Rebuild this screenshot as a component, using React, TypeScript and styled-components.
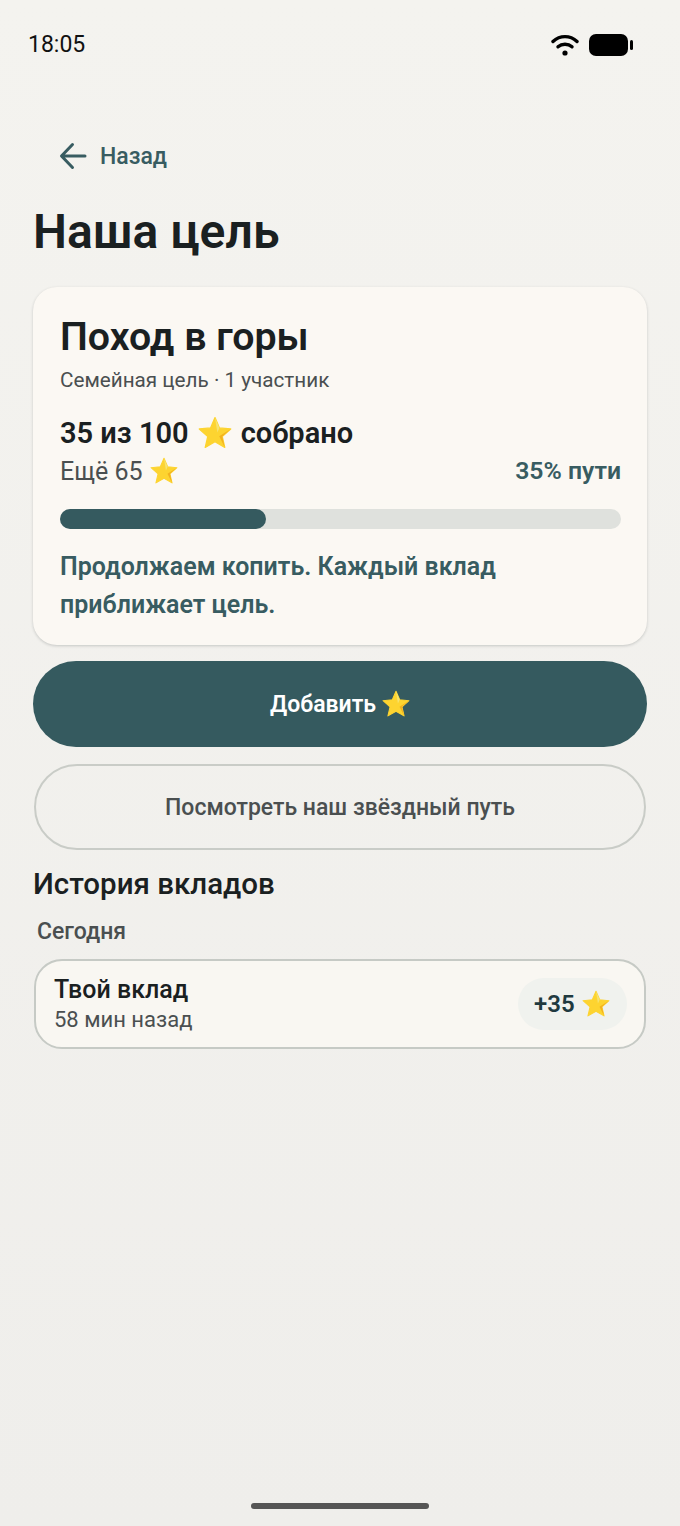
import styled, { createGlobalStyle } from 'styled-components';

const GlobalStyle = createGlobalStyle`
  html, body {
    margin: 0;
    padding: 0;
  }
  * {
    box-sizing: border-box;
  }
`;

const Screen = styled.main`
  width: 680px;
  height: 1526px;
  display: flex;
  flex-direction: column;
  font-family: Roboto, 'Liberation Sans', sans-serif;
  color: #1a2021;
  background: linear-gradient(180deg, #f4f3ef 0%, #efeeeb 100%);
`;
const StatusBar = styled.div`
  height: 88px;
  padding: 2px 46px 0 28px;
  display: flex;
  align-items: center;
  justify-content: space-between;
`;
const Clock = styled.span`
  font-size: 23px;
  line-height: 26px;
  color: #111;
`;
const StatusIcons = styled.div`
  display: flex;
  align-items: center;
  gap: 10px;
`;
const Content = styled.div`
  flex: 1;
  padding: 0 33px;
  display: flex;
  flex-direction: column;
`;
const BackRow = styled.div`
  margin: 46px 0 0 26px;
  height: 44px;
  display: flex;
  align-items: center;
  gap: 13px;
  font-size: 23px;
  font-weight: 500;
  color: #385c61;
`;
const PageTitle = styled.h1`
  margin: 24px 0 0;
  font-size: 48px;
  line-height: 60px;
  font-weight: 600;
  letter-spacing: 0.1px;
`;
const GoalCard = styled.section`
  margin-top: 25px;
  height: 358px;
  padding: 27px 26px 0 27px;
  border-radius: 24px;
  background: #fbf8f3;
  box-shadow: 0 1px 3px rgba(40, 50, 50, 0.22);
`;
const GoalTitle = styled.h2`
  margin: 0;
  font-size: 39.300px;
  line-height: 46px;
  font-weight: 600;
`;
const GoalMeta = styled.div`
  margin-top: 8px;
  font-size: 20.700px;
  line-height: 24px;
  color: #4a4f50;
`;
const Collected = styled.div`
  margin-top: 23px;
  display: flex;
  align-items: center;
  gap: 9px;
  font-size: 29px;
  line-height: 36px;
  font-weight: 600;
`;
const StatsRow = styled.div`
  margin-top: 2px;
  display: flex;
  align-items: center;
  justify-content: space-between;
  height: 36px;
`;
const Remaining = styled.span`
  display: flex;
  align-items: center;
  gap: 7px;
  font-size: 25px;
  color: #4a4f50;
`;
const Percent = styled.span`
  padding-bottom: 2px;
  font-size: 24.800px;
  font-weight: 600;
  color: #385c61;
`;
const Track = styled.div`
  margin-top: 20px;
  height: 20px;
  border-radius: 10px;
  background: #dfe1dd;
`;
const Fill = styled.div`
  height: 100%;
  border-radius: 10px;
  background: #355a5f;
`;
const Encouragement = styled.p`
  margin: 19px 0 0;
  font-size: 25px;
  line-height: 38px;
  font-weight: 600;
  color: #385c61;
`;
const PrimaryButton = styled.button`
  margin-top: 16px;
  height: 86px;
  flex: none;
  border: 0;
  border-radius: 43px;
  background: #355a5f;
  color: #fff;
  font: 600 23px Roboto, sans-serif;
  display: flex;
  align-items: center;
  justify-content: center;
  gap: 6px;
`;
const OutlineButton = styled.button`
  margin: 17px 1px 0;
  height: 86px;
  flex: none;
  border: 2px solid #c9ccc7;
  border-radius: 43px;
  background: transparent;
  color: #4a4f50;
  font: 500 23px Roboto, sans-serif;
`;
const HistoryTitle = styled.h3`
  margin: 17px 0 0;
  font-size: 29.500px;
  line-height: 34px;
  font-weight: 500;
`;
const DayLabel = styled.div`
  margin: 18px 0 0 4px;
  font-size: 23px;
  line-height: 26px;
  font-weight: 500;
  color: #4a4f50;
`;
const HistoryRow = styled.div`
  margin: 14px 1px 0;
  height: 90px;
  padding: 0 17px 0 18px;
  display: flex;
  align-items: center;
  justify-content: space-between;
  border: 2.500px solid #c6cac5;
  border-radius: 28px;
  background: #f9f7f2;
`;
const RowText = styled.div`
  display: flex;
  flex-direction: column;
  gap: 2px;
`;
const RowTitle = styled.span`
  font-size: 25px;
  line-height: 30px;
  font-weight: 500;
`;
const RowTime = styled.span`
  font-size: 22px;
  line-height: 26px;
  color: #4a4f50;
`;
const AmountPill = styled.div`
  height: 52px;
  width: 109px;
  padding: 0 0 0 16px;
  border-radius: 26px;
  display: flex;
  align-items: center;
  gap: 7px;
  background: #f0f2ee;
  font-size: 24px;
  font-weight: 600;
  color: #1f3a3f;
`;
const HomeBar = styled.div`
  width: 178px;
  height: 6px;
  margin: 0 auto 17px;
  border-radius: 3px;
  background: #555;
`;

const Star = ({ size }: { size: number }) => (
  <svg width={size} height={size} viewBox="0 0 32 32" style={{ flex: 'none' }}>
    <path
      d="M16 1.5 20.2 11.2 30.8 12.2 22.8 19.2 25.2 29.6 16 24.2 6.8 29.6 9.2 19.2 1.2 12.2 11.8 11.2Z"
      fill="#fdd430"
      stroke="#fdd430"
      strokeWidth="1.2"
      strokeLinejoin="round"
    />
    <path d="M16 1.5 20.2 11.2 18.2 15.5Z" fill="#f6e36f" />
    <path d="M30.8 12.2 22.8 19.2 25.2 29.6 20 19Z" fill="#f2b21f" />
  </svg>
);

const WifiIcon = () => (
  <svg width="28" height="24" viewBox="0 0 28 24" fill="none" stroke="#000" strokeLinecap="round">
    <path d="M2 8.500C9 2 19 2 26 8.500" strokeWidth="3.400" />
    <path d="M7 13.800C11 10.300 17 10.300 21 13.800" strokeWidth="3.400" />
    <circle cx="14" cy="20" r="2.600" fill="#000" stroke="none" />
  </svg>
);

const BatteryIcon = () => (
  <svg width="45" height="22" viewBox="0 0 45 22">
    <rect x="0" y="0" width="39" height="22" rx="7" fill="#000" />
    <rect x="41" y="6" width="3" height="10" rx="1.500" fill="#000" />
  </svg>
);

const BackArrow = () => (
  <svg width="28" height="28" viewBox="0 0 28 28" fill="none" stroke="#385c61" strokeWidth="3" strokeLinecap="round" strokeLinejoin="round">
    <path d="M26 14H3M13.500 2.500 2.500 14l11 11.500" />
  </svg>
);

export default function App() {
  return (
    <Screen>
      <GlobalStyle />
      <StatusBar>
        <Clock>18:05</Clock>
        <StatusIcons>
          <WifiIcon />
          <BatteryIcon />
        </StatusIcons>
      </StatusBar>
      <Content>
        <BackRow>
          <BackArrow />
          Назад
        </BackRow>
        <PageTitle>Наша цель</PageTitle>
        <GoalCard>
          <GoalTitle>Поход в горы</GoalTitle>
          <GoalMeta>Семейная цель · 1 участник</GoalMeta>
          <Collected>
            35 из 100 <Star size={34} /> собрано
          </Collected>
          <StatsRow>
            <Remaining>
              Ещё 65 <Star size={28} />
            </Remaining>
            <Percent>35% пути</Percent>
          </StatsRow>
          <Track>
            <Fill style={{ width: `${(206 / 561) * 100}%` }} />
          </Track>
          <Encouragement>
            Продолжаем копить. Каждый вклад
            <br />
            приближает цель.
          </Encouragement>
        </GoalCard>
        <PrimaryButton>
          Добавить <Star size={28} />
        </PrimaryButton>
        <OutlineButton>Посмотреть наш звёздный путь</OutlineButton>
        <HistoryTitle>История вкладов</HistoryTitle>
        <DayLabel>Сегодня</DayLabel>
        <HistoryRow>
          <RowText>
            <RowTitle>Твой вклад</RowTitle>
            <RowTime>58 мин назад</RowTime>
          </RowText>
          <AmountPill>
            +35 <Star size={28} />
          </AmountPill>
        </HistoryRow>
      </Content>
      <HomeBar />
    </Screen>
  );
}
